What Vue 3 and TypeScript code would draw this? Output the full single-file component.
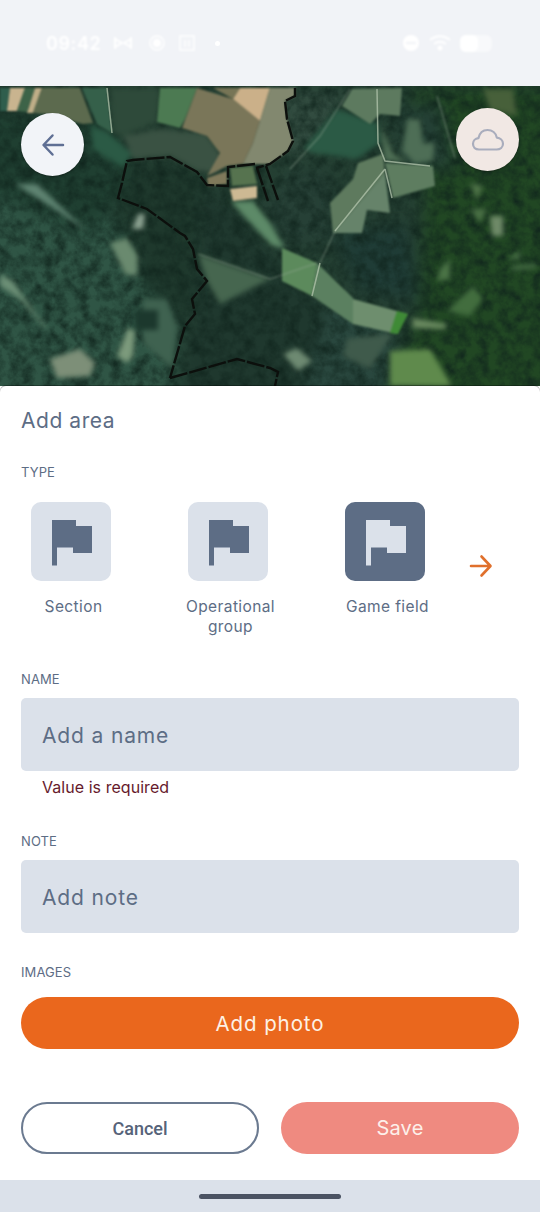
<script setup lang="ts">
interface AreaType {
  label: string
  active?: boolean
}

interface MapShape {
  points: string
  fill: string
}

const types: AreaType[] = [
  { label: 'Section' },
  { label: 'Operational group' },
  { label: 'Game field', active: true },
]

const flagPath = 'M21 18H45V24H61V51H42V45.500H26V63.500H21Z'

// all map coordinates are screenshot coordinates
// big soft forest masses
const forests: MapShape[] = [
  { points: '-20,180 100,190 125,240 180,300 175,400 -20,400', fill: '#2f5545' },
  { points: '-20,110 110,120 130,165 118,200 90,232 -20,190', fill: '#1f3f31' },
  { points: '127,161 200,170 205,200 190,240 195,300 172,330 135,270 120,220', fill: '#1e382c' },
  { points: '200,186 232,200 262,240 320,300 350,400 175,400 195,300', fill: '#1f382e' },
  { points: '282,90 345,90 320,140 285,165', fill: '#324c40' },
  { points: '290,170 330,170 335,240 285,245 260,205', fill: '#264036' },
  { points: '335,235 405,225 420,300 360,290', fill: '#1f3c36' },
  { points: '410,88 560,88 560,400 385,400 420,310 425,190', fill: '#214723' },
  { points: '330,300 395,335 385,400 300,400', fill: '#29473e' },
  { points: '395,110 440,100 455,170 410,170', fill: '#233f34' },
]

// crisp farmland along the top of the map
const farmland: MapShape[] = [
  { points: '0,88 10,88 7,111 0,111', fill: '#2f5e4d' },
  { points: '10,88 25,88 17,111 7,111', fill: '#c9b48f' },
  { points: '25,88 35,88 27,112 17,111', fill: '#3d6348' },
  { points: '35,88 42,88 33,113 27,113', fill: '#bfae88' },
  { points: '42,88 80,88 93,123 83,124 47,114 33,113', fill: '#5c6a4e' },
  { points: '82,88 107,88 112,133 97,124', fill: '#35604a' },
  { points: '160,88 197,88 185,119 180,128 157,122', fill: '#4c7a52' },
  { points: '197,88 233,99 260,121 253,143 243,164 227,166 207,176 220,153 207,136 182,128', fill: '#7a7659' },
  { points: '213,88 240,88 233,99', fill: '#777556' },
  { points: '233,99 240,88 270,88 260,121', fill: '#cbb089' },
  { points: '270,88 295,88 295,96 285,101 287,119 293,141 288,151 270,164 243,164 253,143 260,121', fill: '#82886f' },
  { points: '230,168 253,166 257,184 232,186', fill: '#56734f' },
  { points: '230,189 257,186 257,198 233,201', fill: '#cdb993' },
  { points: '207,178 227,171 227,184 208,186', fill: '#80795b' },
  { points: '342,106 352,89 402,88 400,116 380,114 370,124', fill: '#5d7a5f' },
  { points: '385,163 433,166 435,186 393,198', fill: '#5e7d60' },
  { points: '383,154 385,173 333,233 330,203 353,179 358,163', fill: '#5e7a5e' },
  { points: '385,173 390,213 367,210 362,233 333,233', fill: '#66836a' },
  { points: '282,248 317,263 312,296 282,281', fill: '#5c8a5c' },
  { points: '317,263 353,298 353,324 312,296', fill: '#5b8060' },
  { points: '353,299 408,314 397,334 353,324', fill: '#6e8e6e' },
  { points: '397,311 408,314 398,334 390,333', fill: '#3f8a36' },
]

// forest clearings and other blurry spots
const patches: MapShape[] = [
  { points: '90,124 110,134 132,154 123,168 93,149', fill: '#2b5a45' },
  { points: '110,88 160,88 157,122 123,136 113,133', fill: '#2e4a3a' },
  { points: '123,136 160,129 207,134 222,156 217,174 197,171 170,156 133,159', fill: '#3a5243' },
  { points: '230,201 253,201 270,223 285,248 272,246', fill: '#5d8a68' },
  { points: '303,149 337,109 377,123 380,143 357,159 313,153', fill: '#2b5a45' },
  { points: '380,125 393,153 408,162 385,161', fill: '#4f6f55' },
  { points: '407,119 420,119 423,143 435,143 433,161 415,164 402,151', fill: '#4e6e56' },
  { points: '483,89 513,89 517,116 490,110', fill: '#47603a' },
  { points: '490,216 503,216 503,236 492,236', fill: '#6f8a68' },
  { points: '470,183 483,186 477,200', fill: '#4f7448' },
  { points: '470,209 487,209 480,223', fill: '#4a7045' },
  { points: '15,184 37,184 87,231 50,206', fill: '#5f8472' },
  { points: '138,214 145,214 143,229 132,229', fill: '#8da392' },
  { points: '0,274 13,281 37,316 48,329 43,326 20,299 0,286', fill: '#6c8f76' },
  { points: '143,299 167,299 177,326 173,369 143,343', fill: '#3f6250' },
  { points: '135,310 158,310 158,330 135,330', fill: '#1c382d' },
  { points: '128,328 135,331 133,356 127,363 117,356', fill: '#7c9a7c' },
  { points: '50,359 80,349 95,363 90,376 57,378', fill: '#7d8f78' },
  { points: '110,243 127,238 138,256 137,276 125,274', fill: '#6a8a6f' },
  { points: '198,254 270,279 220,304 207,281', fill: '#46664f' },
  { points: '412,318 447,324 445,329 413,328', fill: '#6a8a60' },
  { points: '390,351 430,349 452,386 390,386', fill: '#5f8a4c' },
  { points: '283,354 297,348 312,361 298,371', fill: '#6e8a72' },
  { points: '347,339 393,333 370,369 343,356', fill: '#3f5a4b' },
  { points: '440,269 450,259 450,279 437,281', fill: '#4b7446' },
  { points: '447,311 473,286 483,299 470,316', fill: '#426d3e' },
  { points: '507,259 520,251 520,259', fill: '#4b7448' },
  { points: '512,266 536,264 536,268 512,270', fill: '#4b7448' },
]

const roads: string[] = [
  '107,88 112,133',
  '377,89 378,143 385,161 430,166',
  '385,169 335,231',
  '385,169 392,198',
  '320,263 312,296',
]

const tracks: string[] = [
  '350,89 338,108 320,136 290,169',
  '437,96 455,158',
  '335,231 320,263',
  '198,254 270,279 317,263',
]

const boundaries: string[] = [
  '295,88 295,96 285,101 287,119 293,141 288,151 270,164 256,168',
  '255,164 228,167 228,186 207,185 197,172 170,157 133,160 127,161 122,183 118,198 147,209 180,233 185,236 193,249 197,269 207,281 192,299 195,314 185,326 170,378',
  '170,378 237,359 270,368 278,372 275,386',
  '257,168 268,201',
  '266,166 278,200',
]
</script>

<template>
  <div class="screen">
    <div class="status">
      <span class="status-time">09:42</span>
      <svg class="status-icon" width="20" height="16" viewBox="0 0 20 16" fill="none" stroke="#fff" stroke-width="2">
        <path d="M2 2v12M2 4l7 4-7 4M18 2v12M18 4l-7 4 7 4" />
      </svg>
      <svg class="status-icon rec" width="16" height="16" viewBox="0 0 16 16" fill="none" stroke="#fff" stroke-width="1.5">
        <circle cx="8" cy="8" r="7" />
        <circle cx="8" cy="8" r="3.5" fill="#fff" />
      </svg>
      <svg class="status-icon box" width="16" height="16" viewBox="0 0 16 16" fill="none" stroke="#fff" stroke-width="1.5">
        <rect x="1" y="1" width="14" height="14" />
        <path d="M6 5v7M10 5v7" />
      </svg>
      <span class="status-dot"></span>
      <span class="status-spacer"></span>
      <svg class="status-icon" width="18" height="18" viewBox="0 0 18 18">
        <circle cx="9" cy="9" r="8" fill="#fff" />
        <rect x="4" y="8" width="10" height="2" fill="#f1f3f7" />
      </svg>
      <svg class="status-icon wifi" width="22" height="16" viewBox="0 0 22 16" fill="none" stroke="#fff" stroke-width="2">
        <path d="M1 5c6-5 14-5 20 0M5 9c4-3 8-3 12 0" />
        <circle cx="11" cy="13" r="1.500" fill="#fff" />
      </svg>
      <span class="battery"><span class="battery-level"></span></span>
    </div>

    <div class="map">
      <svg class="map-art" viewBox="0 86 540 300" preserveAspectRatio="none">
        <defs>
          <filter id="mass" x="-10%" y="-10%" width="120%" height="120%" color-interpolation-filters="sRGB">
            <feGaussianBlur stdDeviation="8" />
          </filter>
          <filter id="soft" x="-5%" y="-5%" width="110%" height="110%" color-interpolation-filters="sRGB">
            <feGaussianBlur stdDeviation="0.9" />
          </filter>
          <filter id="hazy" x="-5%" y="-5%" width="110%" height="110%" color-interpolation-filters="sRGB">
            <feGaussianBlur stdDeviation="2.500" />
          </filter>
          <filter id="grain" x="0" y="0" width="100%" height="100%" color-interpolation-filters="sRGB">
            <feTurbulence type="fractalNoise" baseFrequency="0.09" numOctaves="4" seed="8" />
            <feColorMatrix values="0 0 0 0 0.06  0 0 0 0 0.14  0 0 0 0 0.11  1 1 0 0 -0.74" />
          </filter>
        </defs>
        <rect x="0" y="86" width="540" height="300" fill="#243f32" />
        <g filter="url(#mass)">
          <polygon v-for="(shape, i) in forests" :key="i" :points="shape.points" :fill="shape.fill" />
        </g>
        <rect x="0" y="86" width="540" height="300" filter="url(#grain)" />
        <g filter="url(#hazy)">
          <polygon v-for="(shape, i) in patches" :key="i" :points="shape.points" :fill="shape.fill" />
        </g>
        <g filter="url(#soft)">
          <polygon v-for="(shape, i) in farmland" :key="i" :points="shape.points" :fill="shape.fill" />
          <g fill="none" stroke="#9cae9c" stroke-width="1.300" opacity="0.45">
            <polyline v-for="(track, i) in tracks" :key="i" :points="track" />
          </g>
        </g>
        <g fill="none" stroke="#b4c6ae" stroke-width="1.500" opacity="0.75">
          <polyline v-for="(road, i) in roads" :key="i" :points="road" />
        </g>
        <g fill="none" stroke="#0c0f0c" stroke-width="2.400" stroke-dasharray="18 2">
          <polyline v-for="(line, i) in boundaries" :key="i" :points="line" />
        </g>
      </svg>

      <button class="map-btn back" type="button" aria-label="Back">
        <svg width="28" height="28" viewBox="0 0 28 28" fill="none" stroke="#5f6f94" stroke-width="2.500" stroke-linecap="round" stroke-linejoin="round">
          <path d="M24 14H5M13.500 4.500 4.500 14l9 9.500" />
        </svg>
      </button>
      <button class="map-btn cloud" type="button" aria-label="Sync">
        <svg width="34" height="24" viewBox="0 0 34 24" fill="none" stroke="#a9adbd" stroke-width="2.200" stroke-linejoin="round">
          <path d="M8 21.500C4.200 21.500 2 19 2 15.800c0-3 2.300-5.300 5.400-5.600C8.500 5.300 12 2 16.500 2c4.700 0 8.400 3.200 9.300 7.600 3.300.4 6.200 2.800 6.200 6.200 0 3.300-2.800 5.700-6.300 5.700Z" />
        </svg>
      </button>
    </div>

    <main class="sheet">
      <h1 class="title">Add area</h1>

      <div class="label label-type">TYPE</div>
      <div class="types">
        <div v-for="type in types" :key="type.label" class="type">
          <div class="tile" :class="{ active: type.active }">
            <svg width="80" height="79" viewBox="0 0 80 79">
              <path :d="flagPath" />
            </svg>
          </div>
          <div class="type-name">{{ type.label }}</div>
        </div>
        <svg class="next" width="24" height="24" viewBox="0 0 24 24" fill="none" stroke="#e0702c" stroke-width="2.600" stroke-linecap="round" stroke-linejoin="round">
          <path d="M2 12h19M12.500 2.500 21.500 12l-9 9.500" />
        </svg>
      </div>

      <div class="label label-name">NAME</div>
      <div class="field">Add a name</div>
      <div class="error">Value is required</div>

      <div class="label label-note">NOTE</div>
      <div class="field">Add note</div>

      <div class="label label-images">IMAGES</div>
      <button class="btn photo" type="button">Add photo</button>

      <div class="actions">
        <button class="btn cancel" type="button">Cancel</button>
        <button class="btn save" type="button">Save</button>
      </div>
    </main>

    <div class="nav-bar"><span class="nav-handle"></span></div>
  </div>
</template>

<style scoped>
.screen {
  width: 540px;
  height: 1212px;
  display: flex;
  flex-direction: column;
  overflow: hidden;
  background: #fff;
  font-family: Inter, "Liberation Sans", sans-serif;
  color: #5d6d85;
}

.status {
  height: 86px;
  flex: none;
  display: flex;
  align-items: center;
  padding: 0 48px 0 46px;
  box-sizing: border-box;
  background: #f1f3f7;
  color: #fff;
}

.status-time {
  font-size: 18px;
  font-weight: 600;
  letter-spacing: 0.6px;
  filter: blur(1px);
  margin-right: 12px;
}

.status-icon {
  filter: blur(1px);
  flex: none;
}

.rec {
  margin-left: 16px;
}

.box {
  margin-left: 14px;
}

.status-dot {
  width: 5px;
  height: 5px;
  margin-left: 20px;
  border-radius: 50%;
  background: #fff;
  filter: blur(0.5px);
}

.status-spacer {
  flex: 1;
}

.wifi {
  margin-left: 9px;
}

.battery {
  width: 32px;
  height: 17px;
  margin-left: 9px;
  border-radius: 6px;
  background: rgba(255, 255, 255, 0.5);
  filter: blur(1px);
  display: block;
}

.battery-level {
  display: block;
  width: 18px;
  height: 17px;
  border-radius: 6px;
  background: #fff;
}

.map {
  height: 300px;
  flex: none;
  position: relative;
  background: #1f3b2c;
}

.map-art {
  display: block;
  width: 540px;
  height: 300px;
}

.map-btn {
  position: absolute;
  width: 63px;
  height: 63px;
  padding: 0;
  border: none;
  border-radius: 50%;
  display: flex;
  align-items: center;
  justify-content: center;
  box-shadow: 0 1px 2px rgba(0, 0, 0, 0.35);
}

.back {
  left: 21px;
  top: 27px;
  background: #f2f4f8;
}

.cloud {
  right: 21px;
  top: 22px;
  background: #f1e8e4;
}

.sheet {
  flex: 1;
  min-height: 0;
  padding: 0 21px;
  background: #fff;
  border-radius: 6px 6px 0 0;
  box-sizing: border-box;
  position: relative;
  box-shadow: 0 -1px 0 rgba(0, 0, 0, 0.3);
}

.title {
  margin: 22px 0 0;
  font-size: 21px;
  line-height: 26px;
  font-weight: 400;
  letter-spacing: 0.55px;
}

.label {
  font-size: 13px;
  line-height: 16px;
  letter-spacing: 0.1px;
}

.label-type {
  margin-top: 30px;
}

.types {
  display: flex;
  gap: 52px;
  margin-top: 22px;
}

.type {
  width: 105px;
  flex: none;
  text-align: center;
}

.tile {
  width: 80px;
  height: 79px;
  margin-left: 10px;
  border-radius: 10px;
  background: #dbe1ea;
}

.tile svg {
  display: block;
  fill: #5d6d85;
}

.tile.active {
  background: #5d6d85;
}

.tile.active svg {
  fill: #dbe1ea;
}

.type-name {
  margin-top: 16px;
  font-size: 15.500px;
  line-height: 20px;
  letter-spacing: 0.4px;
}

.next {
  flex: none;
  margin: 52px 0 0 -23px;
}

.label-name {
  margin-top: 34px;
}

.field {
  height: 73px;
  margin-top: 11px;
  padding: 2px 0 0 21px;
  box-sizing: border-box;
  display: flex;
  align-items: center;
  border-radius: 5px;
  background: #dbe1ea;
  font-size: 21px;
  letter-spacing: 0.85px;
}

.error {
  margin: 5px 0 0 21px;
  font-size: 16px;
  line-height: 22px;
  letter-spacing: 0.05px;
  color: #661a2c;
}

.label-note {
  margin-top: 35px;
}

.label-images {
  margin-top: 31px;
}

.btn {
  display: block;
  border: none;
  border-radius: 27px;
  font-family: inherit;
  padding: 0;
  box-sizing: border-box;
}

.photo {
  width: 100%;
  height: 52px;
  margin-top: 17px;
  background: #ea671d;
  color: #fdf1e4;
  font-size: 20.500px;
  letter-spacing: 0.9px;
}

.actions {
  display: flex;
  gap: 22px;
  margin-top: 53px;
}

.actions .btn {
  flex: none;
  width: 238px;
  height: 52px;
}

.cancel {
  background: #fff;
  border: 2px solid #6b7a90;
  color: #566379;
  font-family: Roboto, sans-serif;
  font-size: 18px;
  font-weight: 500;
}

.save {
  background: #ef8a80;
  color: #fdf0ea;
  font-size: 20px;
  letter-spacing: 0.2px;
}

.nav-bar {
  height: 32px;
  flex: none;
  display: flex;
  align-items: center;
  justify-content: center;
  background: #dbe1ea;
}

.nav-handle {
  width: 142px;
  height: 5px;
  border-radius: 3px;
  background: #4b5363;
}
</style>
